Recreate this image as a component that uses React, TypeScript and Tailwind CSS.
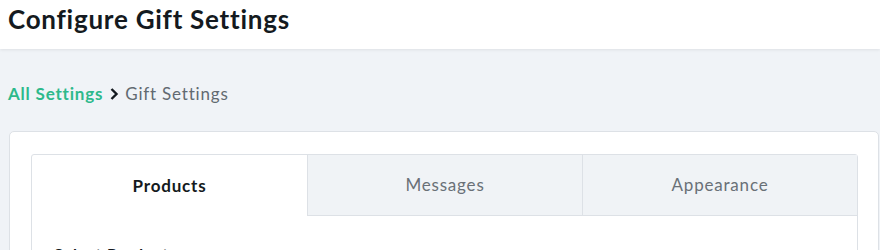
const tabs = ['Products', 'Messages', 'Appearance']

const App = () => {
  const active = 0
  return (
    <div className="h-[250px] overflow-hidden bg-[#f0f3f7] font-['Lato',sans-serif] tracking-[0.8px] text-[#141a20]">
      <header className="h-[49px] bg-white px-2 pt-[2px] shadow-[0_1px_3px_rgba(0,0,0,0.08)]">
        <h1 className="text-[26px] leading-[34px] font-bold tracking-[0.75px]">Configure Gift Settings</h1>
      </header>
      <div className="flex items-center gap-[6px] px-2 pt-[33px] text-[17px] leading-6">
        <span className="font-bold text-[#2db98b]">All Settings</span>
        <svg width="10" height="14" viewBox="0 0 10 14" className="text-[#141a20]">
          <path d="M2.5 2 L7.5 7 L2.5 12" fill="none" stroke="currentColor" strokeWidth="2.4" />
        </svg>
        <span className="text-[#626a71]">Gift Settings</span>
      </div>
      <div className="ml-[9px] mr-[1px] mt-[25px] rounded-t-[5px] border border-[#dde1e6] bg-white pl-[21px] pr-[20px] pt-[22px]">
        <div className="rounded-t-[3px] border border-[#dde1e6] bg-white">
          <div className="grid grid-cols-3">
            {tabs.map((t, i) => (
              <div
                key={t}
                className={
                  i === active
                    ? 'flex h-[61px] items-center justify-center text-[17px] font-bold text-[#141a20]'
                    : 'flex h-[61px] items-center justify-center border-b border-l border-[#dde1e6] bg-[#f0f3f6] text-[17px] text-[#697077]'
                }
              >
                {t}
              </div>
            ))}
          </div>
          <div className="px-[22px] pt-[26px] text-[16px] font-bold">Select Products</div>
          <div className="h-20" />
        </div>
      </div>
    </div>
  )
}

export default App
